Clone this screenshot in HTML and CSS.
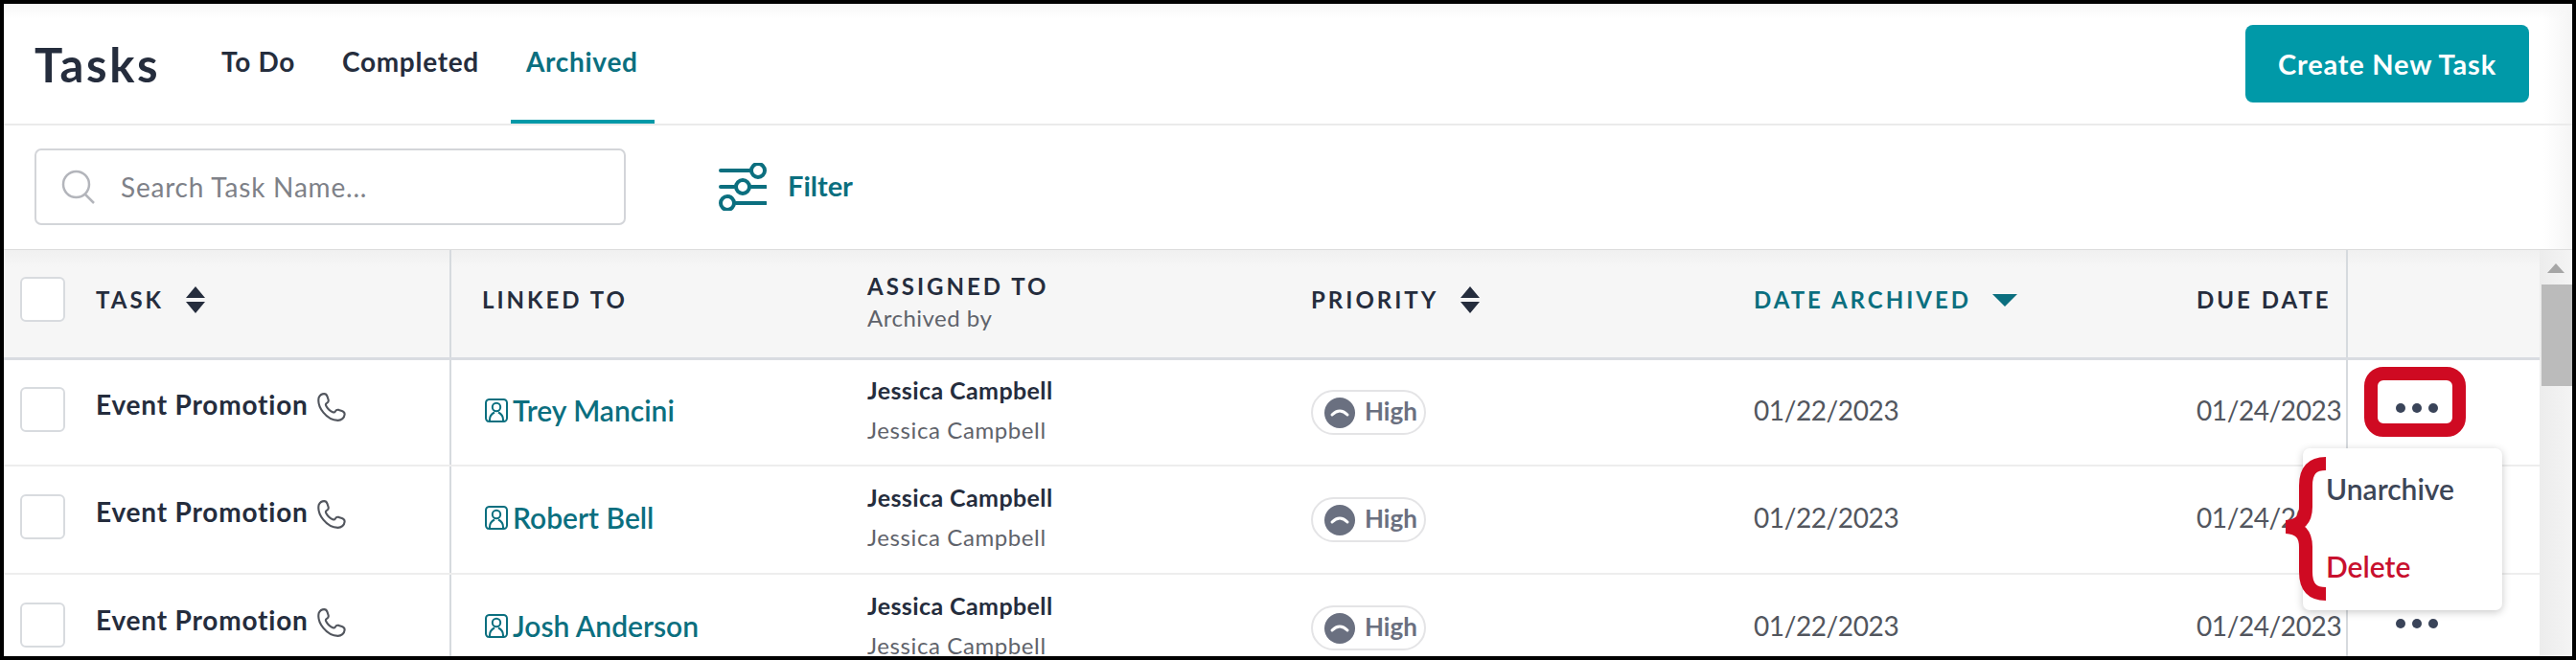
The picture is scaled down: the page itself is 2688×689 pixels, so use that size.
FILE: index.html
```html
<!DOCTYPE html>
<html lang="en">
<head>
<meta charset="utf-8">
<title>Tasks</title>
<link rel="stylesheet" href="styles.css">
</head>
<body>
<div class="frame">
  <header class="topbar">
    <h1 class="title">Tasks</h1>
    <nav class="tabs">
      <a class="tab">To Do</a>
      <a class="tab">Completed</a>
      <a class="tab active">Archived</a>
    </nav>
    <button class="create">Create New Task</button>
  </header>
  <div class="toolbar">
    <div class="search">
      <svg class="search-icon" viewBox="0 0 36 36"><circle cx="15.500" cy="15.500" r="13.500"/><path d="M25 26l9 9"/></svg>
      <span>Search Task Name...</span>
    </div>
    <div class="filter">
      <svg class="filter-icon" viewBox="0 0 50 50"><path d="M2 8h30M2 25h14M34 25h15M18 42h31"/><circle cx="41" cy="8" r="7"/><circle cx="25" cy="25" r="7"/><circle cx="9" cy="42" r="7"/></svg>
      <span>Filter</span>
    </div>
  </div>
  <div class="content">
    <div class="table">
      <div class="row head">
        <div class="cell first">
          <span class="check"></span>
          <span class="th">TASK</span>
          <svg class="sort" viewBox="0 0 22 28"><path d="M11 0l10 12H1zM11 28L1 16h20z"/></svg>
        </div>
        <div class="cell"><span class="th">LINKED TO</span></div>
        <div class="cell stack">
          <span class="th">ASSIGNED TO</span>
          <span class="sub">Archived by</span>
        </div>
        <div class="cell"><span class="th">PRIORITY</span>
          <svg class="sort" viewBox="0 0 22 28"><path d="M11 0l10 12H1zM11 28L1 16h20z"/></svg>
        </div>
        <div class="cell"><span class="th sorted">DATE ARCHIVED</span>
          <svg class="caret" viewBox="0 0 26 13"><path d="M0 0h26L13 13z"/></svg>
        </div>
        <div class="cell"><span class="th">DUE DATE</span></div>
        <div class="cell actions"></div>
      </div>

      <div class="row">
        <div class="cell first">
          <span class="check"></span>
          <span class="task">Event Promotion</span>
          <svg class="phone" viewBox="2 0.500 28 27"><path d="M3.500 5C4.500 3 6.500 1.500 8.500 1.500c1.500 0 2.500 1 3 2.500l1 3c.4 1.300-.2 2.500-1.500 3.300-1 .6-1.200 1.300-.7 2.300 1.300 2.700 3.500 5 6.400 6.200 1 .4 1.800.2 2.300-.8.800-1.300 2-1.800 3.300-1.400l3 1c1.800.6 2.700 2 2.500 3.500-.3 3-3 5.400-6.300 5.400C11 26.500 1.500 14 3.500 5z"/></svg>
        </div>
        <div class="cell"><a class="link">
          <svg class="contact" viewBox="0 0 24 25"><rect x="1" y="1" width="22" height="23" rx="3.500"/><circle cx="12" cy="9" r="4.200"/><path d="M5 24v-2c0-4 3-6.500 5-7.500M19 24v-2c0-4-3-6.500-5-7.500"/></svg>
          Trey Mancini</a></div>
        <div class="cell stack">
          <span class="assignee">Jessica Campbell</span>
          <span class="archiver">Jessica Campbell</span>
        </div>
        <div class="cell"><span class="pill">
          <svg class="high" viewBox="0 0 32 32"><circle cx="16" cy="16" r="16"/><path d="M8 18c3-3 5-4 8-4s5 1 8 4"/></svg>
          High</span></div>
        <div class="cell date">01/22/2023</div>
        <div class="cell date">01/24/2023</div>
        <div class="cell actions"><span class="dots"><i></i><i></i><i></i></span></div>
      </div>

      <div class="row">
        <div class="cell first">
          <span class="check"></span>
          <span class="task">Event Promotion</span>
          <svg class="phone" viewBox="2 0.500 28 27"><path d="M3.500 5C4.500 3 6.500 1.500 8.500 1.500c1.500 0 2.500 1 3 2.500l1 3c.4 1.300-.2 2.500-1.500 3.300-1 .6-1.200 1.300-.7 2.300 1.300 2.700 3.500 5 6.400 6.200 1 .4 1.800.2 2.300-.8.800-1.300 2-1.800 3.300-1.400l3 1c1.800.6 2.700 2 2.500 3.500-.3 3-3 5.400-6.300 5.400C11 26.500 1.500 14 3.500 5z"/></svg>
        </div>
        <div class="cell"><a class="link">
          <svg class="contact" viewBox="0 0 24 25"><rect x="1" y="1" width="22" height="23" rx="3.500"/><circle cx="12" cy="9" r="4.200"/><path d="M5 24v-2c0-4 3-6.500 5-7.500M19 24v-2c0-4-3-6.500-5-7.500"/></svg>
          Robert Bell</a></div>
        <div class="cell stack">
          <span class="assignee">Jessica Campbell</span>
          <span class="archiver">Jessica Campbell</span>
        </div>
        <div class="cell"><span class="pill">
          <svg class="high" viewBox="0 0 32 32"><circle cx="16" cy="16" r="16"/><path d="M8 18c3-3 5-4 8-4s5 1 8 4"/></svg>
          High</span></div>
        <div class="cell date">01/22/2023</div>
        <div class="cell date">01/24/2023</div>
        <div class="cell actions"></div>
      </div>

      <div class="row">
        <div class="cell first">
          <span class="check"></span>
          <span class="task">Event Promotion</span>
          <svg class="phone" viewBox="2 0.500 28 27"><path d="M3.500 5C4.500 3 6.500 1.500 8.500 1.500c1.500 0 2.500 1 3 2.500l1 3c.4 1.300-.2 2.500-1.500 3.300-1 .6-1.200 1.300-.7 2.300 1.300 2.700 3.500 5 6.400 6.200 1 .4 1.800.2 2.300-.8.800-1.300 2-1.800 3.300-1.400l3 1c1.800.6 2.700 2 2.500 3.500-.3 3-3 5.400-6.300 5.400C11 26.500 1.500 14 3.500 5z"/></svg>
        </div>
        <div class="cell"><a class="link">
          <svg class="contact" viewBox="0 0 24 25"><rect x="1" y="1" width="22" height="23" rx="3.500"/><circle cx="12" cy="9" r="4.200"/><path d="M5 24v-2c0-4 3-6.500 5-7.500M19 24v-2c0-4-3-6.500-5-7.500"/></svg>
          Josh Anderson</a></div>
        <div class="cell stack">
          <span class="assignee">Jessica Campbell</span>
          <span class="archiver">Jessica Campbell</span>
        </div>
        <div class="cell"><span class="pill">
          <svg class="high" viewBox="0 0 32 32"><circle cx="16" cy="16" r="16"/><path d="M8 18c3-3 5-4 8-4s5 1 8 4"/></svg>
          High</span></div>
        <div class="cell date">01/22/2023</div>
        <div class="cell date">01/24/2023</div>
        <div class="cell actions"><span class="dots"><i></i><i></i><i></i></span></div>
      </div>
    </div>
    <div class="scrollbar">
      <svg class="scroll-up" viewBox="0 0 18 10"><path d="M9 0l9 10H0z"/></svg>
      <div class="thumb"></div>
    </div>
  </div>

  <div class="menu">
    <span class="menu-item">Unarchive</span>
    <span class="menu-item danger">Delete</span>
  </div>
  <div class="callout-box"></div>
  <svg class="callout-brace" viewBox="0 0 42 150"><path d="M42 7C28 7 21 14 21 30v22c0 12-5 20-21 21 16 1 21 9 21 21v26c0 16 7 23 21 23"/></svg>
</div>
</body>
</html>
```
FILE: styles.css
```css
* { box-sizing: border-box; }
html, body { margin: 0; padding: 0; }
body { width: 2688px; height: 689px; overflow: hidden; background: #fff; font-family: "Lato", "Liberation Sans", sans-serif; color: #252d3d; }

.frame { position: relative; width: 2688px; height: 689px; border: solid #000; border-width: 4px; overflow: hidden; display: flex; flex-direction: column; background: #fff; }

.topbar { flex: 0 0 125px; display: flex; align-items: flex-start; padding-left: 32px; border-bottom: 2px solid #ebebeb; background: linear-gradient(#f7f7f7, rgba(255,255,255,0) 16px), linear-gradient(90deg, #fff calc(100% - 30px), #f5f5f5); position: relative; }
.title { margin: 33px 0 0; font-size: 49px; line-height: 60px; font-weight: 700; letter-spacing: 2.600px; color: #252d3d; width: 195px; }
.tabs { display: flex; height: 125px; }
.tab { font-size: 28px; font-weight: 700; line-height: 36px; padding-top: 42px; color: #252d3d; letter-spacing: .7px; }
.tab:nth-child(1) { width: 126px; }
.tab:nth-child(2) { width: 176px; }
.tab.active { width: 150px; height: 125px; padding-left: 16px; color: #0b6f7f; border-bottom: 4px solid #0099a8; }
.create { margin: 22px 45px 0 auto; width: 296px; height: 81px; background: #0099a8; color: #fff; border: 0; border-radius: 8px; font: 700 29px "Lato", sans-serif; letter-spacing: .8px; }

.toolbar { flex: 0 0 129px; display: flex; align-items: center; padding-left: 32px; padding-bottom: 2px; background: linear-gradient(90deg, #fff calc(100% - 30px), #f5f5f5); }
.search { width: 617px; height: 80px; border: 2px solid #d3d5d9; border-radius: 7px; display: flex; align-items: center; padding-left: 26px; gap: 26px; color: #7e8188; font-size: 28px; letter-spacing: .8px; }
.search-icon { width: 36px; height: 36px; fill: none; stroke: #b3b5bb; stroke-width: 2.500; }
.filter { margin-left: 97px; display: flex; align-items: center; gap: 22px; color: #0b6f7f; font-size: 29px; font-weight: 700; }
.filter span { padding-bottom: 3px; }
.filter-icon { width: 50px; height: 50px; fill: none; stroke: #0b6f7f; stroke-width: 4; stroke-linecap: round; }

.content { flex: 1; display: flex; min-height: 0; border-top: 1px solid #ddd; }
.table { flex: 1; min-width: 0; overflow: hidden; }
.row { display: grid; grid-template-columns: 465px 436px 463px 462px 462px 156px 1fr; height: 113px; border-bottom: 2px solid #ededed; }
.row.head { height: 115px; background: linear-gradient(#f0f0f0, #f6f6f6 18px); border-bottom: 3px solid #d9dce1; }
.head + .row { height: 111px; }
.cell { display: flex; align-items: center; min-width: 0; white-space: nowrap; }
.cell:nth-child(2) { border-left: 2px solid #d6dade; padding-left: 32px; }
.cell.first { padding-left: 17px; }
.cell.actions { border-left: 2px solid #d6dade; padding-left: 50px; padding-bottom: 10px; }
.stack { flex-direction: column; align-items: flex-start; justify-content: center; padding-bottom: 6px; }
.head .stack { padding-bottom: 0; }

.check { flex: none; width: 47px; height: 47px; background: #fff; border: 2px solid #d8dbdf; border-radius: 6px; margin-right: 32px; margin-bottom: 7px; }
.head .check { margin-bottom: 9px; }
.th { font-size: 24px; font-weight: 700; letter-spacing: 3px; color: #252d3d; padding-bottom: 9px; }
.th.sorted { color: #0b6f7f; }
.head .stack .th { padding-bottom: 0; line-height: 30px; }
.sub { font-size: 24px; line-height: 36px; color: #5f636b; letter-spacing: .5px; }
.sort { width: 22px; height: 28px; margin-left: 22px; margin-bottom: 8px; fill: #252d3d; flex: none; }
.caret { width: 26px; height: 13px; margin-left: 22px; margin-bottom: 8px; fill: #0b6f7f; flex: none; }

.task { font-size: 28px; font-weight: 700; color: #252d3d; padding-bottom: 18px; letter-spacing: .8px; }
.phone { flex: none; width: 31px; height: 30px; margin-left: 9px; margin-bottom: 12px; fill: none; stroke: #52565e; stroke-width: 1.900; }
.link { display: flex; align-items: center; gap: 5px; font-size: 30px; font-weight: 600; color: #0b6f7f; padding-left: 3px; padding-bottom: 5px; }
.contact { flex: none; width: 24px; height: 25px; fill: none; stroke: #0b6f7f; stroke-width: 2; }
.assignee { font-size: 25px; line-height: 34px; font-weight: 700; color: #252d3d; letter-spacing: .4px; }
.archiver { font-size: 24px; line-height: 34px; margin-top: 8px; color: #5f636b; letter-spacing: .6px; }
.pill { display: flex; align-items: center; gap: 10px; width: 120px; height: 47px; padding: 0 0 3px 12px; border: 2px solid #e4e4e6; border-radius: 24px; font-size: 26px; font-weight: 700; color: #6a7080; }
.high { flex: none; width: 32px; height: 32px; margin-top: 3px; fill: #6a7080; }
.high path { fill: none; stroke: #fff; stroke-width: 3; stroke-linecap: round; }
.date { font-size: 28px; color: #52565e; letter-spacing: -.4px; padding-bottom: 6px; }
.dots { display: flex; gap: 7px; }
.dots i { width: 10px; height: 10px; border-radius: 50%; background: #3a4459; }

.scrollbar { flex: 0 0 34px; background: linear-gradient(90deg, #ececec, #f4f4f4); position: relative; display: flex; flex-direction: column; align-items: center; }
.scroll-up { width: 18px; height: 10px; margin-top: 14px; fill: #a6a6a6; }
.thumb { width: 32px; height: 106px; margin-top: 12px; margin-left: 2px; background: #bbb; }

.menu { position: absolute; left: 2399px; top: 464px; width: 208px; height: 169px; background: #fff; border-radius: 7px; box-shadow: 0 2px 8px rgba(0,0,0,.22); display: flex; flex-direction: column; padding: 24px 0 0 24px; gap: 45px; font-size: 30px; font-weight: 600; color: #3d4657; }
.menu-item { line-height: 36px; }
.danger { color: #c8102e; }
.callout-box { position: absolute; left: 2463px; top: 379px; width: 106px; height: 73px; border: 14px solid #cf0a22; border-radius: 20px; }
.callout-brace { position: absolute; left: 2381px; top: 473px; width: 42px; height: 150px; fill: none; stroke: #cf0a22; stroke-width: 14; }
```
